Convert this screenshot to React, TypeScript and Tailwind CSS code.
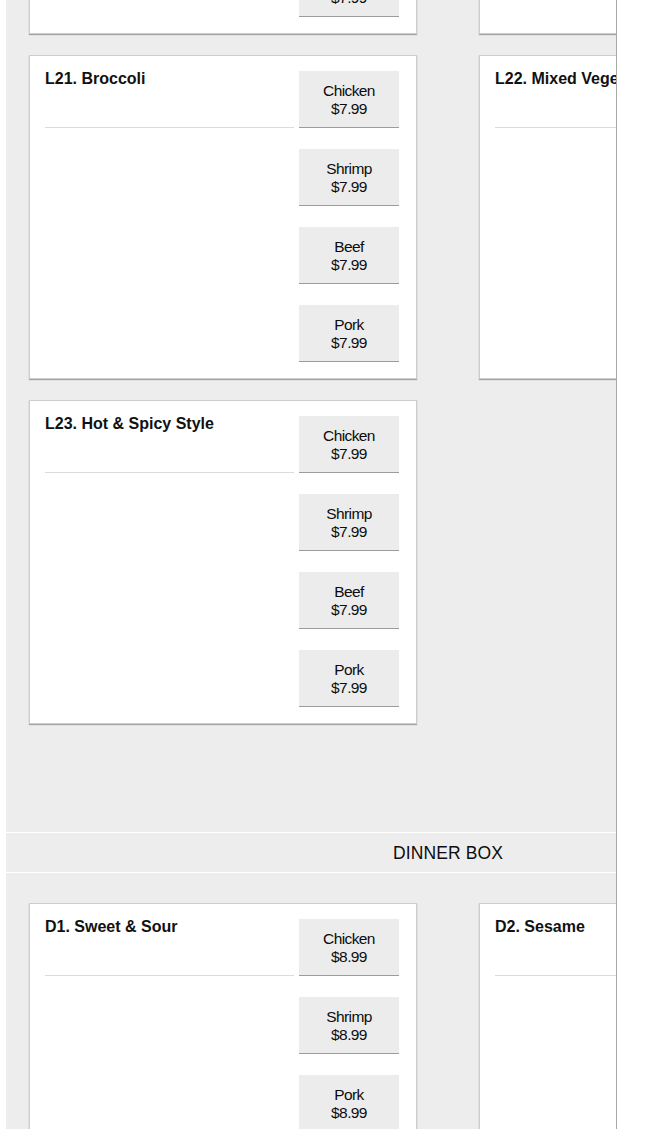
type Item = { name: string; options: { label: string; price: string }[] };

const lunch: Item[] = [
  {
    name: "L19. Garlic Sauce",
    options: ["Chicken", "Shrimp", "Beef", "Pork"].map((l) => ({ label: l, price: "$7.99" })),
  },
  {
    name: "L20. Kung Pao",
    options: ["Chicken", "Shrimp", "Beef", "Pork"].map((l) => ({ label: l, price: "$7.99" })),
  },
  {
    name: "L21. Broccoli",
    options: ["Chicken", "Shrimp", "Beef", "Pork"].map((l) => ({ label: l, price: "$7.99" })),
  },
  {
    name: "L22. Mixed Vegetables",
    options: ["Chicken", "Shrimp", "Beef", "Pork"].map((l) => ({ label: l, price: "$7.99" })),
  },
  {
    name: "L23. Hot & Spicy Style",
    options: ["Chicken", "Shrimp", "Beef", "Pork"].map((l) => ({ label: l, price: "$7.99" })),
  },
];

const dinner: Item[] = [
  {
    name: "D1. Sweet & Sour",
    options: ["Chicken", "Shrimp", "Pork"].map((l) => ({ label: l, price: "$8.99" })),
  },
  {
    name: "D2. Sesame",
    options: ["Chicken", "Shrimp", "Pork"].map((l) => ({ label: l, price: "$8.99" })),
  },
];

function MenuCard({ item }: { item: Item }) {
  return (
    <div className="flex gap-[5px] bg-white border border-[#cdcdcd] shadow-[0_1px_1px_rgba(0,0,0,0.3)] pl-[15px] pr-[17px] pt-[15px] pb-[16px]">
      <div className="w-[249px] shrink-0">
        <h3 className="text-[16px] leading-[16px] font-bold text-[#111] whitespace-nowrap">{item.name}</h3>
        <div className="mt-[40px] border-t border-[#dcdcdc]" />
      </div>
      <div className="w-[100px] shrink-0 flex flex-col gap-[21px]">
        {item.options.map((o) => (
          <button
            key={o.label}
            className="h-[57px] pt-[2px] bg-[#ececec] border-b border-[#9c9c9c] flex flex-col items-center justify-center text-[15.5px] leading-[18px] tracking-[-0.6px] text-[#0d0d0d]"
          >
            <span>{o.label}</span>
            <span>{o.price}</span>
          </button>
        ))}
      </div>
    </div>
  );
}

export default function App() {
  return (
    <div
      className="h-[1129px] overflow-hidden bg-white"
      style={{ fontFamily: '"Liberation Sans", Arial, sans-serif' }}
    >
      <div className="ml-[6px] w-[611px] h-full overflow-hidden bg-[#ededed] border-r border-r-[#a8a8a8]">
        <div className="w-[884px] -mt-[290px]">
          <div className="grid grid-cols-[388px_388px] gap-x-[62px] gap-y-[21px] px-[23px] items-start">
            {lunch.map((it) => (
              <MenuCard key={it.name} item={it} />
            ))}
          </div>

          <div className="h-[108px]" />

          <div className="h-[41px] pt-[2px] border-y border-white flex items-center justify-center">
            <h2 className="text-[17.5px] tracking-[0.1px] text-[#0d0d0d] uppercase">Dinner Box</h2>
          </div>

          <div className="grid grid-cols-[388px_388px] gap-x-[62px] gap-y-[21px] px-[23px] pt-[30px] items-start">
            {dinner.map((it) => (
              <MenuCard key={it.name} item={it} />
            ))}
          </div>
        </div>
      </div>
    </div>
  );
}
